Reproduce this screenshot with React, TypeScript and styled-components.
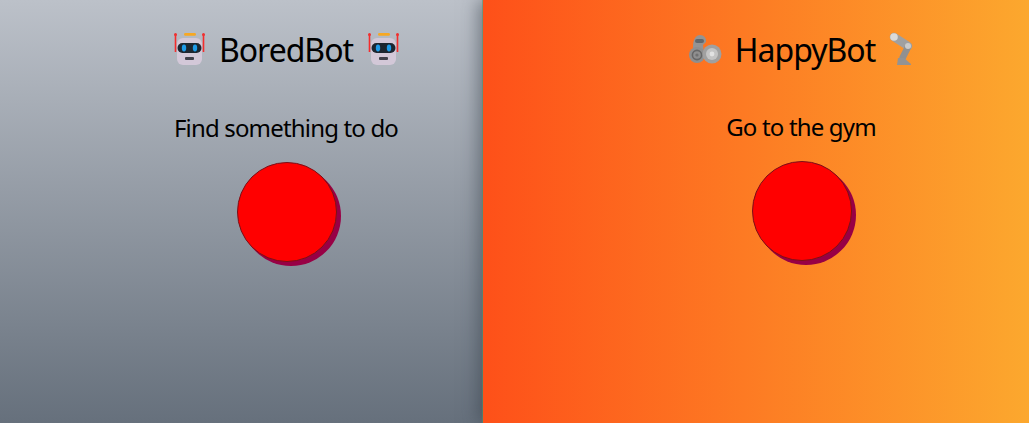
import React from 'react';
import styled, { createGlobalStyle } from 'styled-components';

const Global = createGlobalStyle`
  html, body { margin: 0; height: 100%; overflow: hidden; }
  body { font-family: "Noto Sans", sans-serif; color: #000; }
`;

const Page = styled.div`
  display: flex;
  height: 100vh;
`;

const Panel = styled.section<{ $width: number; $inset: number; $background: string; $raised?: boolean }>`
  box-sizing: border-box;
  width: ${(p) => p.$width}px;
  padding-left: ${(p) => p.$inset}px;
  display: flex;
  flex-direction: column;
  align-items: center;
  background: ${(p) => p.$background};
  position: relative;
  ${(p) => p.$raised && 'box-shadow: -1px 0 0 rgba(80, 150, 100, 0.5), -5px 0 16px rgba(50, 60, 70, 0.5);'}
`;

const Title = styled.h1`
  margin: 26px 0 0;
  padding-right: 2px;
  height: 46px;
  display: flex;
  align-items: center;
  gap: 14px;
  font-size: 32px;
  font-weight: 400;
  letter-spacing: -1px;
`;

const Task = styled.p<{ $top: number }>`
  margin: ${(p) => p.$top}px 0 0;
  padding-right: 2px;
  font-size: 24px;
  line-height: 33px;
  letter-spacing: -0.83px;
`;

const RedButton = styled.button`
  box-sizing: border-box;
  display: block;
  width: 100px;
  height: 100px;
  margin-top: 18px;
  padding: 0;
  border: 1px solid #7a1018;
  border-radius: 50%;
  background: #ff0000;
  box-shadow: 4px 4px 0 #980045;
`;

const Icon = styled.svg`
  flex: none;
  overflow: visible;
`;

function Robot() {
  return (
    <Icon width="32" height="32" viewBox="0 0 32 32" aria-hidden="true">
      <rect x="11" y="0" width="12" height="2.8" rx="1.4" fill="#f7a823" />
      <rect x="4" y="5" width="25" height="27" rx="6" fill="#d3c8d8" />
      <rect x="4.5" y="10" width="24" height="10" rx="5" fill="#1c2630" />
      <ellipse cx="11" cy="15" rx="2.2" ry="3.4" fill="#1e9be8" />
      <ellipse cx="22" cy="15" rx="2.2" ry="3.4" fill="#1e9be8" />
      <rect x="12" y="24" width="9" height="3" rx="1" fill="#40404a" />
      <path d="M2.500 1v18M30.500 1v18" stroke="#f52c2c" strokeWidth="1.6" />
      <circle cx="2.500" cy="1.400" r="1.500" fill="#f03030" />
      <circle cx="30.500" cy="1.400" r="1.500" fill="#f03030" />
    </Icon>
  );
}

function Arm() {
  return (
    <Icon width="32" height="32" viewBox="0 0 32 32" aria-hidden="true">
      <path d="M4 14C4 6 7 2 11 2c4 0 6.500 3 6 7l-3 3 1 8H5z" fill="#949494" />
      <rect x="6" y="6" width="9" height="4" rx="2" fill="#62676c" />
      <circle cx="8" cy="22" r="8" fill="#8f8f8f" />
      <circle cx="8" cy="22" r="4.600" fill="none" stroke="#666" strokeWidth="1.600" />
      <circle cx="8" cy="22" r="1.600" fill="#707070" />
      <circle cx="23" cy="21" r="9.500" fill="#a0a0a0" />
      <circle cx="23" cy="21" r="6" fill="#c4c4c4" />
      <circle cx="23" cy="21" r="2.400" fill="#e2e2e2" />
    </Icon>
  );
}

function Leg() {
  return (
    <Icon width="24" height="32" viewBox="-2 0 24 32" aria-hidden="true">
      <path d="M3 4l14 9" stroke="#a0a0a0" strokeWidth="8.500" strokeLinecap="round" />
      <path d="M17 14l-6 12" stroke="#909090" strokeWidth="6.500" />
      <circle cx="3" cy="4" r="3.800" fill="#dadada" />
      <circle cx="17" cy="13" r="3" fill="#cacaca" />
      <path d="M7 25h6l7 6v1H6z" fill="#939393" />
    </Icon>
  );
}

export default function App() {
  return (
    <Page>
      <Global />
      <Panel $width={483} $inset={91} $background="linear-gradient(#bcc1c9, #66707c)">
        <Title>
          <Robot />
          BoredBot
          <Robot />
        </Title>
        <Task $top={39}>Find something to do</Task>
        <RedButton aria-label="Find something to do" />
      </Panel>
      <Panel $width={546} $inset={92} $background="linear-gradient(to right, #fe5019, #fca82e)" $raised>
        <Title>
          <Arm />
          HappyBot
          <Leg />
        </Title>
        <Task $top={38}>Go to the gym</Task>
        <RedButton aria-label="Go to the gym" />
      </Panel>
    </Page>
  );
}
